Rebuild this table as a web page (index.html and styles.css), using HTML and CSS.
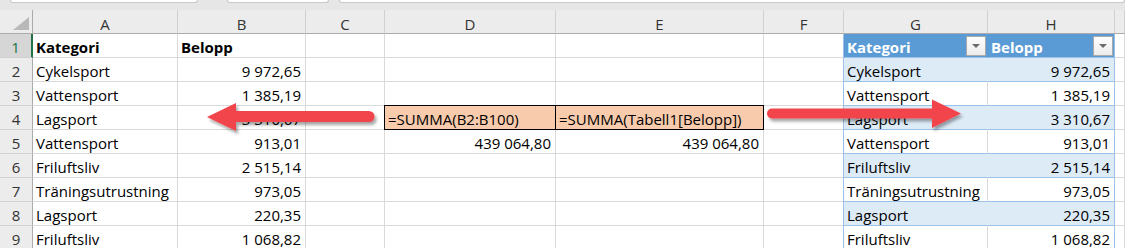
FILE: index.html
```html
<!DOCTYPE html>
<html lang="sv">
<head>
    <meta charset="UTF-8">
    <title>Summa av tabellkolumn</title>
    <link rel="stylesheet" href="styles.css">
</head>
<body>

<!-- Name box / formula bar strip -->
<div class="topbar">
    <span class="box namebox"></span>
    <span class="box btns"></span>
    <span class="box fbar"></span>
</div>

<!-- Worksheet grid -->
<div class="sheet">
    <div class="col corner"><span class="tri"></span></div>
    <div class="col">A</div><div class="col">B</div><div class="col">C</div><div class="col">D</div>
    <div class="col">E</div><div class="col">F</div><div class="col">G</div><div class="col">H</div><div class="col"></div>

    <div class="row active">1</div>
    <div class="b">Kategori</div><div class="b">Belopp</div><div></div><div></div><div></div><div></div>
    <div class="tg th"><span class="lbl">Kategori</span><span class="filter"></span></div>
    <div class="tr th"><span class="lbl">Belopp</span><span class="filter"></span></div><div></div>

    <div class="row">2</div>
    <div>Cykelsport</div><div class="num">9 972,65</div><div></div><div></div><div></div><div></div>
    <div class="tg band">Cykelsport</div><div class="tr band num">9 972,65</div><div></div>

    <div class="row">3</div>
    <div>Vattensport</div><div class="num">1 385,19</div><div></div><div></div><div></div><div></div>
    <div class="tg">Vattensport</div><div class="tr num">1 385,19</div><div></div>

    <div class="row">4</div>
    <div>Lagsport</div><div class="num">3 310,67</div><div></div>
    <div class="fx">=SUMMA(B2:B100)</div><div class="fx">=SUMMA(Tabell1[Belopp])</div><div></div>
    <div class="tg band">Lagsport</div><div class="tr band num">3 310,67</div><div></div>

    <div class="row">5</div>
    <div>Vattensport</div><div class="num">913,01</div><div></div>
    <div class="num">439 064,80</div><div class="num">439 064,80</div><div></div>
    <div class="tg">Vattensport</div><div class="tr num">913,01</div><div></div>

    <div class="row">6</div>
    <div>Friluftsliv</div><div class="num">2 515,14</div><div></div><div></div><div></div><div></div>
    <div class="tg band">Friluftsliv</div><div class="tr band num">2 515,14</div><div></div>

    <div class="row">7</div>
    <div>Träningsutrustning</div><div class="num">973,05</div><div></div><div></div><div></div><div></div>
    <div class="tg">Träningsutrustning</div><div class="tr num">973,05</div><div></div>

    <div class="row">8</div>
    <div>Lagsport</div><div class="num">220,35</div><div></div><div></div><div></div><div></div>
    <div class="tg band">Lagsport</div><div class="tr band num">220,35</div><div></div>

    <div class="row">9</div>
    <div>Friluftsliv</div><div class="num">1 068,82</div><div></div><div></div><div></div><div></div>
    <div class="tg band-none">Friluftsliv</div><div class="tr num">1 068,82</div><div></div>

    <!-- callout arrows drawn over the cells -->
    <svg class="arrows" width="1125" height="240" viewBox="0 0 1125 240">
        <defs>
            <filter id="shade" x="-10%" y="-50%" width="120%" height="200%">
                <feDropShadow dx="2" dy="3" stdDeviation="1.8" flood-color="#000" flood-opacity="0.35"/>
            </filter>
        </defs>
        <g fill="#f2444c" stroke="#f2444c" filter="url(#shade)">
            <line x1="369" y1="106.5" x2="232" y2="106.5" stroke-width="11" stroke-linecap="round"/>
            <polygon points="207,107 236,93 236,121" stroke="none"/>
            <line x1="772" y1="103.5" x2="935" y2="103.5" stroke-width="10" stroke-linecap="round"/>
            <polygon points="961,103.5 932,89.5 932,118" stroke="none"/>
        </g>
    </svg>
</div>

</body>
</html>
```

FILE: styles.css
```css
body {
    margin: 0;
    font-family: "Open Sans", sans-serif;
    font-size: 15px;
    color: #000;
    background: #fff;
    overflow: hidden;
}

/* strip above the column letters */
.topbar {
    height: 10px;
    background: #e6e6e6;
    display: flex;
    align-items: flex-start;
}
.topbar .box {
    height: 2px;
    background: #fff;
    border: 1px solid #c8c8c8;
    border-top: 0;
    border-radius: 0 0 3px 3px;
}
.namebox { margin-left: 10px; width: 186px; }
.btns { margin-left: 29px; width: 100px; }
.fbar { margin-left: 10px; flex: 1; }

/* grid */
.sheet {
    position: relative;
    display: grid;
    grid-template-columns: 33px 145px 128px 79px 171px 208px 80px 144px 127px 1fr;
    grid-auto-rows: 24px;
}
.sheet > div {
    box-sizing: border-box;
    border-right: 1px solid #dadada;
    border-bottom: 1px solid #dadada;
    padding: 4px 4px 0 3px;
    line-height: 19px;
    white-space: nowrap;
    overflow: hidden;
}

.sheet > .col {
    background: #ececec;
    border-right-color: #d0d0d0;
    border-bottom-color: #ababab;
    text-align: center;
    color: #333;
    padding: 5px 0 0;
}
.sheet > .corner {
    position: relative;
    border-right-color: #ababab;
}
.tri {
    position: absolute;
    right: 3px;
    bottom: 3px;
    width: 0;
    height: 0;
    border-left: 16px solid transparent;
    border-bottom: 13px solid #b9b9b9;
}

.sheet > .row {
    background: #ececec;
    border-right-color: #ababab;
    border-bottom-color: #d0d0d0;
    text-align: center;
    color: #333;
    padding: 4px 0 0;
}
.sheet > .row.active {
    background: #d6d6d6;
    color: #217346;
    border-right: 2px solid #217346;
}

.b { font-weight: bold; }
.num { text-align: right; }

/* cells holding the two formulas */
.sheet > .fx {
    margin: -1px 0 0 -1px;
    border: 1px solid #000;
    background: #f8cbad;
}

/* Tabell1 */
.sheet > .tg {
    margin-left: -1px;
    border-left: 1px solid #9bc2e6;
    border-bottom-color: #9bc2e6;
}
.sheet > .tr {
    border-right-color: #9bc2e6;
    border-bottom-color: #9bc2e6;
}
.sheet > .band {
    background: #ddebf7;
}
.sheet > .tg.band {
    border-right-color: #ddebf7;
}
.sheet > .th {
    display: flex;
    align-items: center;
    justify-content: space-between;
    padding: 0 1px 0 3px;
    background: #5b9bd5;
    color: #fff;
    font-weight: bold;
}
.sheet > .tg.th {
    border-right-color: #5b9bd5;
}
.th .lbl {
    padding-top: 4px;
    line-height: 19px;
}
.filter {
    box-sizing: border-box;
    width: 20px;
    height: 20px;
    border: 1px solid #a9a9a9;
    background: linear-gradient(#fdfdfd, #ececec);
    display: flex;
    align-items: center;
    justify-content: center;
}
.filter::after {
    content: "";
    width: 0;
    height: 0;
    border-left: 4px solid transparent;
    border-right: 4px solid transparent;
    border-top: 4px solid #6b6b6b;
}

.arrows {
    position: absolute;
    left: 0;
    top: 0;
    pointer-events: none;
    overflow: visible;
}
```
